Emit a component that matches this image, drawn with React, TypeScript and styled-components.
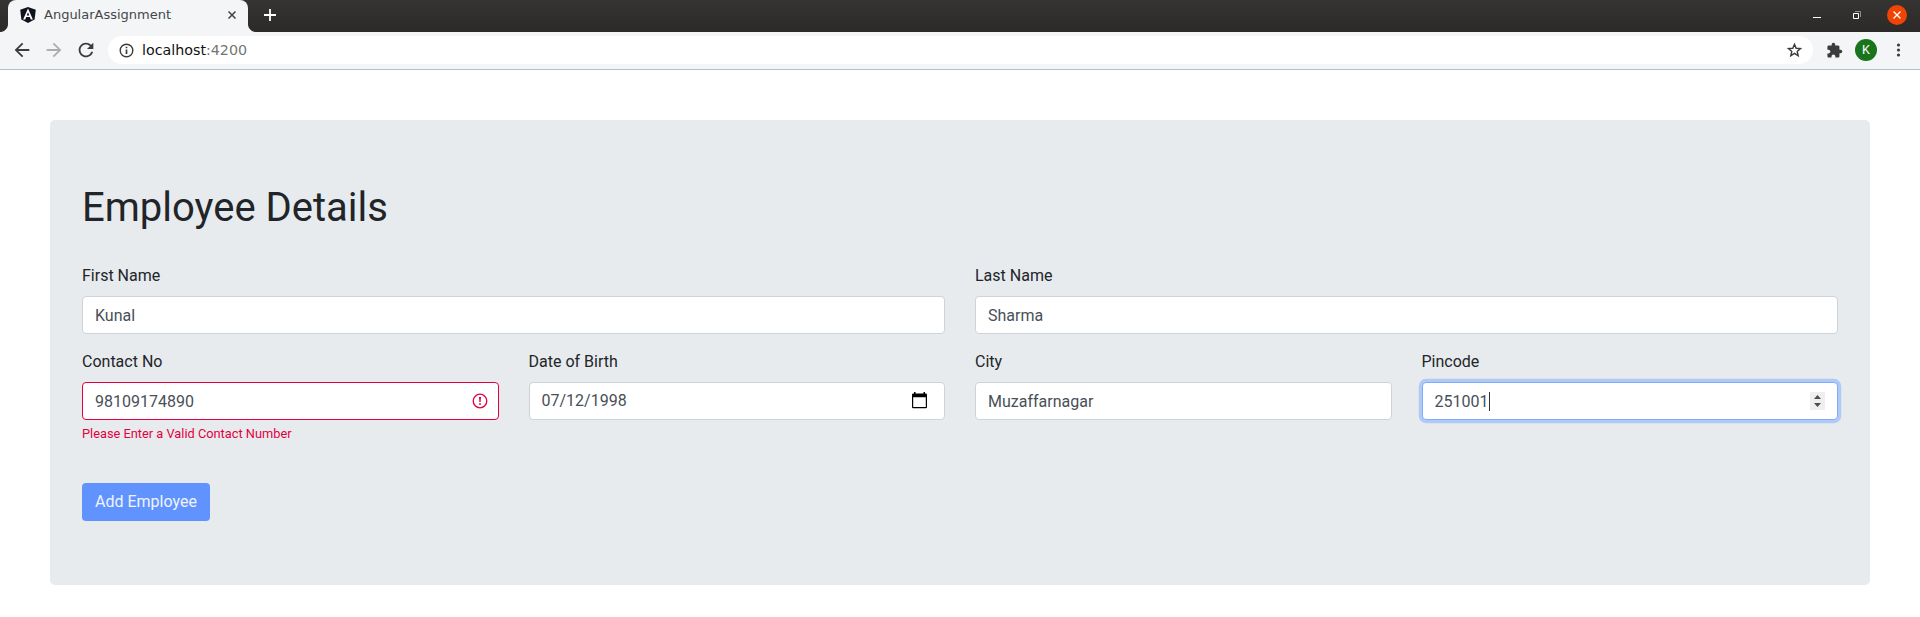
import React from "react";
import styled, { createGlobalStyle, css } from "styled-components";
import {
  MdArrowBack,
  MdArrowForward,
  MdExtension,
  MdRefresh,
} from "react-icons/md";

const GlobalStyle = createGlobalStyle`
  *, *::before, *::after { box-sizing: border-box; }
  body {
    margin: 0;
    background: #fff;
    color: #212529;
    font: 400 16px/1.5 Roboto, sans-serif;
    overflow: hidden;
  }
`;

const Window = styled.div`
  display: flex;
  flex-direction: column;
`;

/* ---- Browser frame ---- */

const TabStrip = styled.header`
  display: flex;
  height: 32px;
  padding-left: 8px;
  background: linear-gradient(#353432, #2c2a29);
`;

const Tab = styled.div`
  position: relative;
  display: flex;
  align-items: center;
  width: 240px;
  height: 32px;
  padding: 0 12px 2px;
  border-radius: 8px 8px 0 0;
  background: #f3f5f7;

  &::before,
  &::after {
    content: "";
    position: absolute;
    bottom: 0;
    width: 8px;
    height: 8px;
  }
  &::before {
    left: -8px;
    background: radial-gradient(circle at 0 0, transparent 7.5px, #f3f5f7 8.5px);
  }
  &::after {
    right: -8px;
    background: radial-gradient(circle at 100% 0, transparent 7.5px, #f3f5f7 8.5px);
  }
`;

const TabTitle = styled.span`
  flex: 1;
  margin-left: 8px;
  color: #464748;
  font: 13px/16px "DejaVu Sans", sans-serif;
`;

const NewTab = styled.div`
  display: flex;
  margin: 9px 0 0 16px;
`;

const WindowControls = styled.div`
  display: flex;
  align-items: flex-start;
  margin: 5px 13px 0 auto;
`;

const Minimise = styled.span`
  width: 8px;
  height: 1px;
  margin: 12px 32px 0 0;
  background: #fff;
`;

const Restore = styled.svg`
  margin: 6px 26px 0 0;
`;

const CloseButton = styled.span`
  display: flex;
  align-items: center;
  justify-content: center;
  width: 20px;
  height: 20px;
  border-radius: 50%;
  background: #f04405;
`;

const Toolbar = styled.nav`
  display: flex;
  align-items: center;
  height: 38px;
  padding: 0 18px 1px 11px;
  border-bottom: 1px solid #b9bfc7;
  background: #f3f5f7;
  color: #3c3c3d;
`;

const NavButton = styled.span<{ $faded?: boolean }>`
  display: flex;
  margin-right: 10px;
  color: ${({ $faded }) => ($faded ? "#adadae" : "inherit")};
`;

const AddressBar = styled.div`
  display: flex;
  align-items: center;
  flex: 1;
  height: 28px;
  margin: 0 13.5px 0 1px;
  padding: 0 9.5px;
  border-radius: 14px;
  background: #fff;
`;

const Url = styled.span`
  flex: 1;
  margin-left: 7.5px;
  color: #757575;
  font: 14.25px/20px "DejaVu Sans", sans-serif;

  b {
    color: #111;
    font-weight: 400;
  }
`;

const Avatar = styled.span`
  width: 22px;
  height: 22px;
  margin: 0 18px 0 12px;
  border-radius: 50%;
  background: #1a741c;
  color: #fff;
  font: 12.5px/22px Roboto, sans-serif;
  text-align: center;
`;

/* ---- Employee form ---- */

const Panel = styled.main`
  margin: 50px 50px 32px;
  padding: 64px 32px;
  border-radius: 5px;
  background: #e7ebee;
`;

const Heading = styled.h1`
  margin: 0 0 32px;
  font-size: 40px;
  font-weight: 400;
  line-height: 48px;
`;

const FormRow = styled.div<{ $columns: number }>`
  display: grid;
  grid-template-columns: repeat(${({ $columns }) => $columns}, 1fr);
  column-gap: 30px;
  margin-bottom: 16px;
`;

const Label = styled.label`
  display: block;
  margin-bottom: 8px;
`;

type FieldState = "normal" | "invalid" | "focused";

const Control = styled.div<{ $state: FieldState }>`
  display: flex;
  align-items: center;
  height: 38px;
  padding: 0 12px;
  border: 1px solid #ced3d9;
  border-radius: 4px;
  background: #fff;
  color: #495057;

  ${({ $state }) =>
    $state === "invalid" &&
    css`
      border-color: #e4003f;
      padding-right: 9.5px;
    `}
  ${({ $state }) =>
    $state === "focused" &&
    css`
      border-color: #80acff;
      box-shadow: 0 0 0 3.2px rgba(98, 149, 255, 0.4);
    `}
`;

const Value = styled.span<{ $lift?: boolean }>`
  padding-top: ${({ $lift }) => ($lift ? 0 : "2px")};
`;

const Caret = styled.span`
  width: 1px;
  height: 19px;
  margin-left: 1px;
  background: #333;
`;

const Adornment = styled.svg<{ $right?: number; $raise?: number }>`
  margin: 0 ${({ $right = 0 }) => $right}px ${({ $raise = 0 }) => $raise}px auto;
`;

const Feedback = styled.div`
  margin-top: 4px;
  color: #e4003f;
  font-size: 12.8px;
`;

const SubmitButton = styled.button`
  display: block;
  height: 38px;
  margin-top: 40px;
  padding: 0 13px;
  border: 0;
  border-radius: 4px;
  background: #6193ff;
  color: #eff4fc;
  font: 16px/24px Roboto, sans-serif;
`;

const AngularLogo = () => (
  <svg width="16" height="16" viewBox="0 0 16 16">
    <path d="M8 0 .2 2.7l1.2 9.7L8 16l6.6-3.6L15.8 2.7z" fill="#10121f" />
    <path
      fillRule="evenodd"
      d="M8 1.6 3.1 12.4h2.1l1-2.400h3.600l1 2.400h2.100zM8 5.300l1.300 3.100H6.700z"
      fill="#fff"
    />
  </svg>
);

const InfoIcon = () => (
  <svg width="17" height="17" viewBox="0 0 17 17" fill="none" stroke="currentColor">
    <circle cx="8.5" cy="8.5" r="6.3" strokeWidth="1.4" />
    <path d="M8.5 4.7v1.6M8.5 7.6V12" strokeWidth="1.7" />
  </svg>
);

const StarIcon = () => (
  <svg width="17" height="17" viewBox="0 0 17 17" fill="none" stroke="currentColor">
    <path
      d="M8.5 2.3l1.7 4 4.3.35-3.3 2.85 1 4.2-3.7-2.3-3.7 2.3 1-4.2-3.300-2.850 4.300-.35z"
      strokeWidth="1.4"
    />
  </svg>
);

const Cross = ({ size, color, width }: { size: number; color: string; width: number }) => (
  <svg width={size} height={size} viewBox="0 0 8 8">
    <path d="M.5.5l7 7M7.5.5l-7 7" stroke={color} strokeWidth={width} />
  </svg>
);

const Field = ({
  label,
  value,
  state = "normal",
  lift,
  children,
  feedback,
}: {
  label: string;
  value: string;
  state?: FieldState;
  lift?: boolean;
  children?: React.ReactNode;
  feedback?: string;
}) => (
  <div>
    <Label>{label}</Label>
    <Control $state={state}>
      <Value $lift={lift}>{value}</Value>
      {children}
    </Control>
    {feedback && <Feedback>{feedback}</Feedback>}
  </div>
);

export default function App() {
  return (
    <Window>
      <GlobalStyle />
      <TabStrip>
        <Tab>
          <AngularLogo />
          <TabTitle>AngularAssignment</TabTitle>
          <Cross size={8} color="#404142" width={1.5} />
        </Tab>
        <NewTab>
          <svg width="12" height="12" viewBox="0 0 12 12">
            <path d="M6 0v12M0 6h12" stroke="#fff" strokeWidth="1.8" />
          </svg>
        </NewTab>
        <WindowControls>
          <Minimise />
          <Restore width="8" height="8" viewBox="0 0 8 8">
            <path d="M2 .5h5.5V6" fill="none" stroke="#8d8c8b" />
            <path d="M.5 2.5h5v5h-5z" fill="none" stroke="#fff" />
          </Restore>
          <CloseButton>
            <Cross size={8} color="#fff" width={1.3} />
          </CloseButton>
        </WindowControls>
      </TabStrip>
      <Toolbar>
        <NavButton><MdArrowBack size={22} /></NavButton>
        <NavButton $faded><MdArrowForward size={22} /></NavButton>
        <NavButton><MdRefresh size={22} /></NavButton>
        <AddressBar>
          <InfoIcon />
          <Url><b>localhost</b>:4200</Url>
          <StarIcon />
        </AddressBar>
        <MdExtension size={17} />
        <Avatar>K</Avatar>
        <svg width="7" height="14" viewBox="0 0 7 14" fill="currentColor">
          <circle cx="3.5" cy="2" r="1.6" />
          <circle cx="3.5" cy="7" r="1.6" />
          <circle cx="3.5" cy="12" r="1.6" />
        </svg>
      </Toolbar>
      <Panel>
        <Heading>Employee Details</Heading>
        <FormRow $columns={2}>
          <Field label="First Name" value="Kunal" />
          <Field label="Last Name" value="Sharma" />
        </FormRow>
        <FormRow $columns={4}>
          <Field
            label="Contact No"
            value="98109174890"
            state="invalid"
            feedback="Please Enter a Valid Contact Number"
          >
            <Adornment width="16" height="16" viewBox="0 0 16 16">
              <circle cx="8" cy="8" r="6.8" fill="none" stroke="#e4003f" strokeWidth="1.3" />
              <path d="M7 4h2l-.4 5H7.4z" fill="#e4003f" />
              <circle cx="8" cy="11" r=".9" fill="#e4003f" />
            </Adornment>
          </Field>
          <Field label="Date of Birth" value="07/12/1998" lift>
            <Adornment $right={5} $raise={2} width="15" height="17" viewBox="0 0 15 17">
              <path
                fillRule="evenodd"
                d="M2 0h1.5v1.5h8V0H13v1.5h.7q1.3 0 1.3 1.3V15q0 1.300-1.300 1.300H1.300Q0 16.300 0 15V2.800Q0 1.500 1.300 1.500H2zM1.200 5.200V15h12.600V5.200z"
                fill="#000"
              />
            </Adornment>
          </Field>
          <Field label="City" value="Muzaffarnagar" />
          <Field label="Pincode" value="251001" state="focused">
            <Caret />
            <Adornment width="15" height="18" viewBox="0 0 15 18">
              <path d="M0 0h15v18H0z" fill="#efefef" />
              <path d="M4 7l3.5-4L11 7zM4 11h7l-3.5 4z" fill="#4d4d4d" />
            </Adornment>
          </Field>
        </FormRow>
        <SubmitButton disabled>Add Employee</SubmitButton>
      </Panel>
    </Window>
  );
}
